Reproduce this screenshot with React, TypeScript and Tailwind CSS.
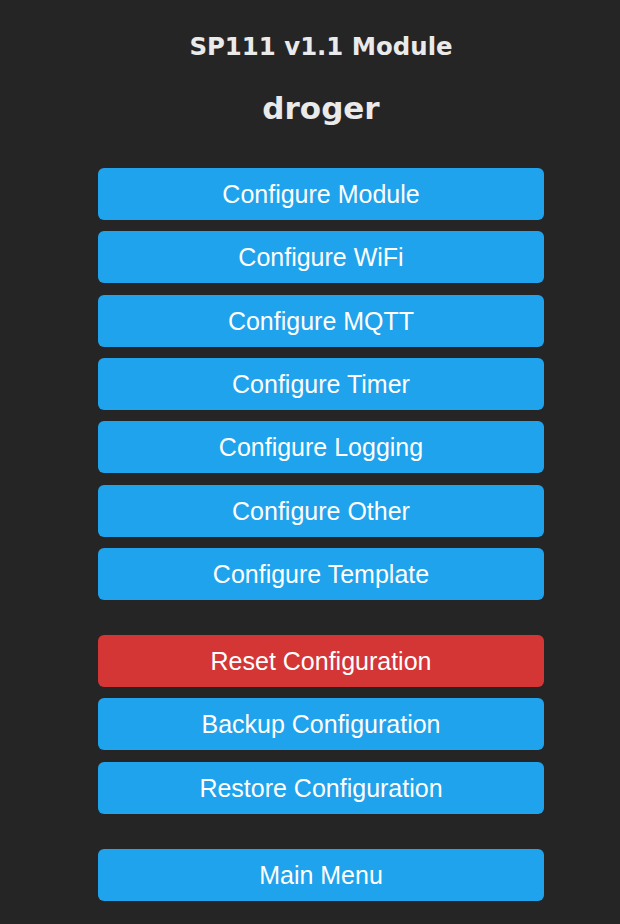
const groups: { label: string; color?: string }[][] = [
  [
    { label: 'Configure Module' },
    { label: 'Configure WiFi' },
    { label: 'Configure MQTT' },
    { label: 'Configure Timer' },
    { label: 'Configure Logging' },
    { label: 'Configure Other' },
    { label: 'Configure Template' },
  ],
  [
    { label: 'Reset Configuration', color: 'red' },
    { label: 'Backup Configuration' },
    { label: 'Restore Configuration' },
  ],
  [{ label: 'Main Menu' }],
]

function MenuButton({ label, color }: { label: string; color?: string }) {
  return (
    <button
      className={`w-full h-[52px] rounded-[6px] text-white text-[25px] leading-[52px] ${
        color === 'red' ? 'bg-[#d43535]' : 'bg-[#1fa3ec]'
      }`}
      style={{ fontFamily: '"Liberation Sans", Arial, sans-serif' }}
    >
      {label}
    </button>
  )
}

export default function App() {
  return (
    <div className="min-h-[924px] w-[620px] bg-[#252525] text-[#eaeaea] font-['DejaVu_Sans',Verdana,sans-serif]">
      <div className="w-[446px] ml-[98px] pt-[31px]">
        <div className="text-center">
          <h3 className="text-[24.4px] font-bold leading-[32px]">SP111 v1.1 Module</h3>
          <h2 className="mt-[25px] text-[31px] font-bold leading-[40px]">droger</h2>
        </div>
        <div className="mt-[40px] flex flex-col gap-[35px]">
          {groups.map((g, i) => (
            <div key={i} className="flex flex-col gap-[11.33px]">
              {g.map((b) => (
                <MenuButton key={b.label} {...b} />
              ))}
            </div>
          ))}
        </div>
      </div>
    </div>
  )
}
